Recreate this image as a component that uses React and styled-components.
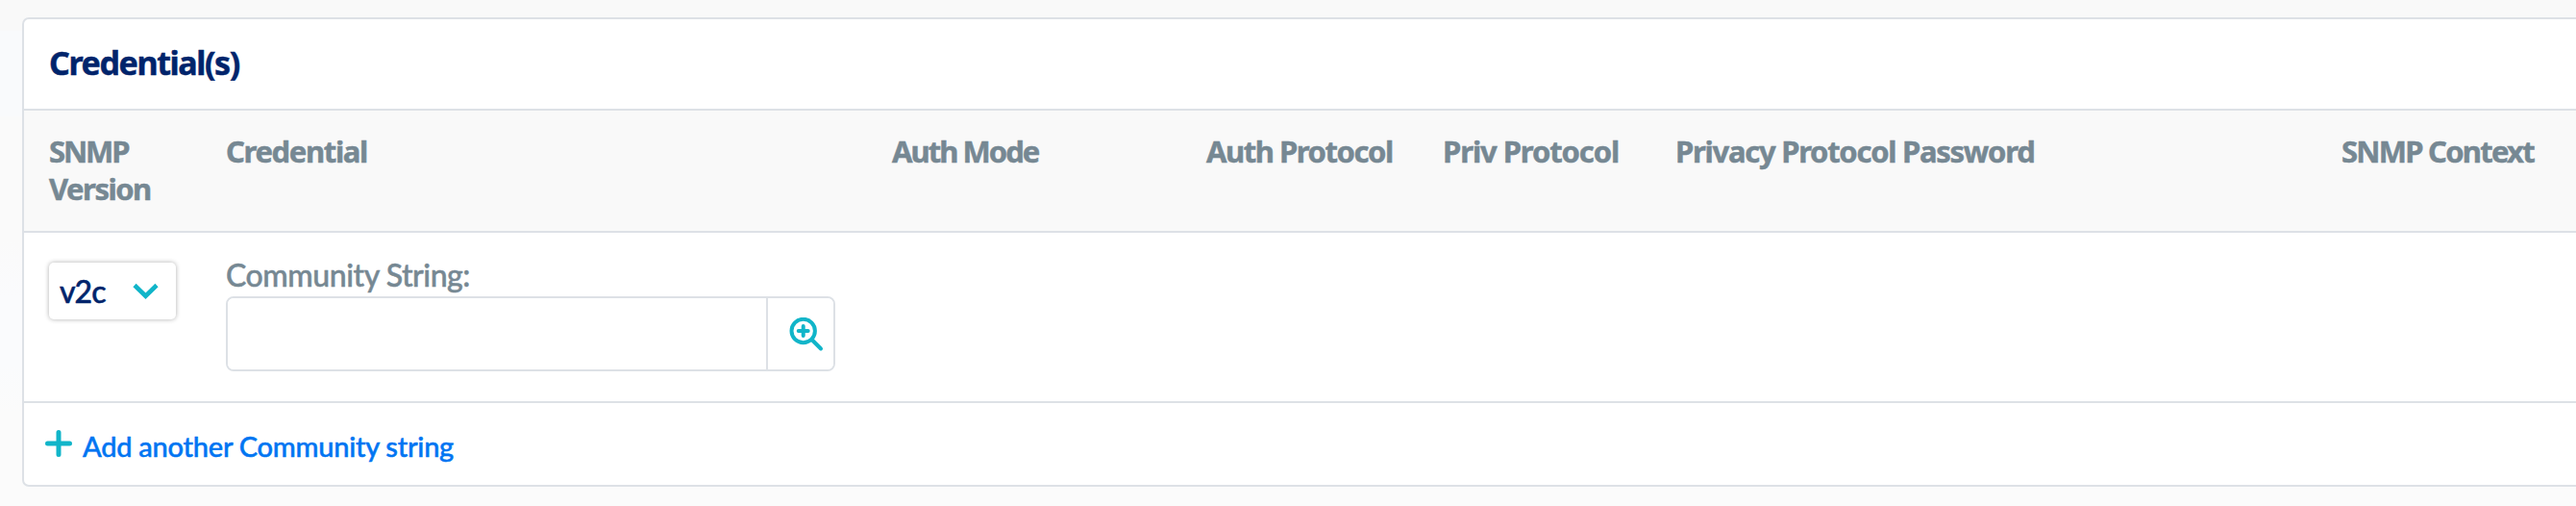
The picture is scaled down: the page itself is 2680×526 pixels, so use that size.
import React from "react";
import styled, { createGlobalStyle } from "styled-components";

const line = "#dde1e6";
const teal = "#11b5c9";
const navy = "#00246b";
const slate = "#768893";

const GlobalStyle = createGlobalStyle`
  * { box-sizing: border-box; }
  body { margin: 0; background: #fafafa; overflow: hidden; }
`;

const Page = styled.main`
  height: 526px;
  padding: 18px 0 20px 23px;
  background: linear-gradient(#f9f9f9 32px, #f9fafc 32px, #f9fafc 121px, #fafafa 121px, #fafafa 250px, #fafbfd 310px, #fafbfd 380px, #fbfbfb 430px);
`;

const Panel = styled.section`
  width: 2700px;
  height: 488px;
  border: 2px solid ${line};
  border-radius: 7px;
  background: #fff;
  display: flex;
  flex-direction: column;
  overflow: hidden;
`;

const PanelTitle = styled.h2`
  margin: 0;
  height: 95px;
  padding: 22px 0 0 26px;
  border-bottom: 2px solid ${line};
  color: ${navy};
  font: 700 34px/46px "Noto Sans", sans-serif;
  letter-spacing: -1.4px;
  -webkit-text-stroke: 0.5px;
`;

const columns = "184px 693px 327px 246px 242px 693px 1fr";

const HeaderRow = styled.div`
  display: grid;
  grid-template-columns: ${columns};
  height: 127px;
  padding: 23px 0 0 26px;
  border-bottom: 2px solid ${line};
  background: #f9f9f9;
`;

const HeaderCell = styled.div`
  color: ${slate};
  font: 700 31px/39px "Noto Sans", sans-serif;
  letter-spacing: ${(p) => p.$tracking}px;
  -webkit-text-stroke: 0.5px;

  &::first-line {
    letter-spacing: ${(p) => p.$firstLine ?? p.$tracking}px;
  }
`;

const CredentialRow = styled.div`
  display: grid;
  grid-template-columns: ${columns};
  align-items: start;
  height: 177px;
  padding: 23px 0 0 26px;
  border-bottom: 2px solid ${line};
`;

const VersionSelect = styled.button`
  display: flex;
  align-items: center;
  justify-content: space-between;
  width: 132px;
  height: 59px;
  margin: 8px 0 0 0;
  padding: 0 18px 0 11px;
  border: 0;
  border-radius: 5px;
  background: #fff;
  box-shadow: 0 0 5px rgba(0, 0, 0, 0.32);
  color: ${navy};
  font: 500 32px/56px "Lato", sans-serif;
  letter-spacing: -1px;
  -webkit-text-stroke: 0.5px;
`;

const Field = styled.label`
  display: block;
  color: ${slate};
`;

const FieldLabel = styled.span`
  display: block;
  height: 43px;
  font: 500 32px/42px "Lato", sans-serif;
  letter-spacing: -0.45px;
  -webkit-text-stroke: 0.5px;
  white-space: nowrap;
`;

const InputGroup = styled.span`
  display: flex;
  width: 634px;
  height: 78px;
  border: 2px solid ${line};
  border-radius: 8px;
  overflow: hidden;
`;

const TextInput = styled.input`
  flex: 1;
  min-width: 0;
  border: 0;
  padding: 0 16px;
  background: #fff;
  outline: none;
  font: 400 32px "Lato", sans-serif;
`;

const LookupButton = styled.button`
  display: flex;
  align-items: flex-start;
  width: 70px;
  padding: 20px 0 0 22px;
  border: 0;
  border-left: 2px solid ${line};
  background: #fff;
`;

const PanelFooter = styled.div`
  display: flex;
  align-items: flex-start;
  gap: 11px;
  padding: 24px 0 0 22px;
`;

const AddLink = styled.a`
  color: #0075f2;
  font: 500 29px/42px "Lato", sans-serif;
  letter-spacing: -0.25px;
  -webkit-text-stroke: 0.5px;
`;

const Icon = styled.svg`
  display: block;
  flex: none;
  fill: none;
  stroke: ${teal};
  margin-top: ${(p) => p.$top || 0}px;
`;

const headers = [
  { label: <>SNMP<br />Version</>, tracking: -1.5, firstLine: -2.1 },
  { label: "Credential", tracking: -1.35 },
  { label: "Auth Mode", tracking: -1.95 },
  { label: "Auth Protocol", tracking: -1.45 },
  { label: "Priv Protocol", tracking: -1.1 },
  { label: "Privacy Protocol Password", tracking: -1.28 },
  { label: "SNMP Context", tracking: -1.75 },
];

export default function App() {
  return (
    <Page>
      <GlobalStyle />
      <Panel>
        <PanelTitle>Credential(s)</PanelTitle>
        <HeaderRow>
          {headers.map(({ label, tracking, firstLine }, i) => (
            <HeaderCell key={i} $tracking={tracking} $firstLine={firstLine}>{label}</HeaderCell>
          ))}
        </HeaderRow>
        <CredentialRow>
          <VersionSelect aria-label="SNMP version">
            v2c
            <Icon width="27" height="18" viewBox="0 0 27 18" strokeWidth="4.6">
              <path d="M2 2.5 13.5 13.7 25 2.5" />
            </Icon>
          </VersionSelect>
          <Field>
            <FieldLabel>Community String:</FieldLabel>
            <InputGroup>
              <TextInput />
              <LookupButton aria-label="Look up credential">
                <Icon width="36" height="36" viewBox="0 0 36 36" strokeWidth="4" strokeLinecap="round">
                  <circle cx="14.7" cy="14" r="12.2" />
                  <path d="M9.7 14h10M14.7 9v10M24.5 24l8.5 8.5" />
                </Icon>
              </LookupButton>
            </InputGroup>
          </Field>
        </CredentialRow>
        <PanelFooter>
          <Icon $top={4} width="28" height="28" viewBox="0 0 28 28" strokeWidth="5" strokeLinecap="round">
            <path d="M2.5 14h23M14 2.5v23" />
          </Icon>
          <AddLink>Add another Community string</AddLink>
        </PanelFooter>
      </Panel>
    </Page>
  );
}
